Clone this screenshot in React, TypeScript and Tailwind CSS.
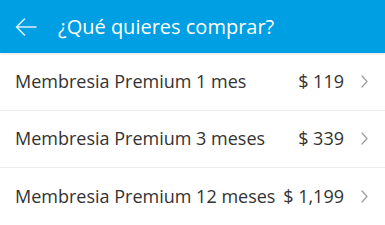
const items = [
  { name: "Membresia Premium 1 mes", price: "$ 119" },
  { name: "Membresia Premium 3 meses", price: "$ 339" },
  { name: "Membresia Premium 12 meses", price: "$ 1,199" },
];

export default function App() {
  return (
    <div className="h-[225px] w-[385px] overflow-hidden bg-white" style={{ fontFamily: "'Open Sans', 'Noto Sans', sans-serif" }}>
      <header className="relative z-10 flex h-[53px] items-center bg-[#009ee3] shadow-[0_1px_2px_rgba(0,0,0,0.12)]">
        <svg className="ml-[15px] h-[18px] w-[22px]" viewBox="0 0 22 18" fill="none" stroke="#d8f0fb" strokeWidth="1.6" strokeLinecap="round" strokeLinejoin="round">
          <path d="M21 9H1.5M9.5 1L1.5 9l8 8" />
        </svg>
        <h1 className="ml-[21px] text-[20px] text-white">¿Qué quieres comprar?</h1>
      </header>
      <ul>
        {items.map((item) => (
          <li key={item.name} className="flex h-[57.5px] items-center border-b border-[#ececec] pl-[15px] pr-[17px] text-[18px] text-[#333333]">
            <span className="flex-1">{item.name}</span>
            <span>{item.price}</span>
            <svg className="ml-[17px] h-[13px] w-[7px]" viewBox="0 0 7 13" fill="none" stroke="#a0a0a0" strokeWidth="1.3" strokeLinecap="round" strokeLinejoin="round">
              <path d="M1 1l5 5.5L1 12" />
            </svg>
          </li>
        ))}
      </ul>
    </div>
  );
}
